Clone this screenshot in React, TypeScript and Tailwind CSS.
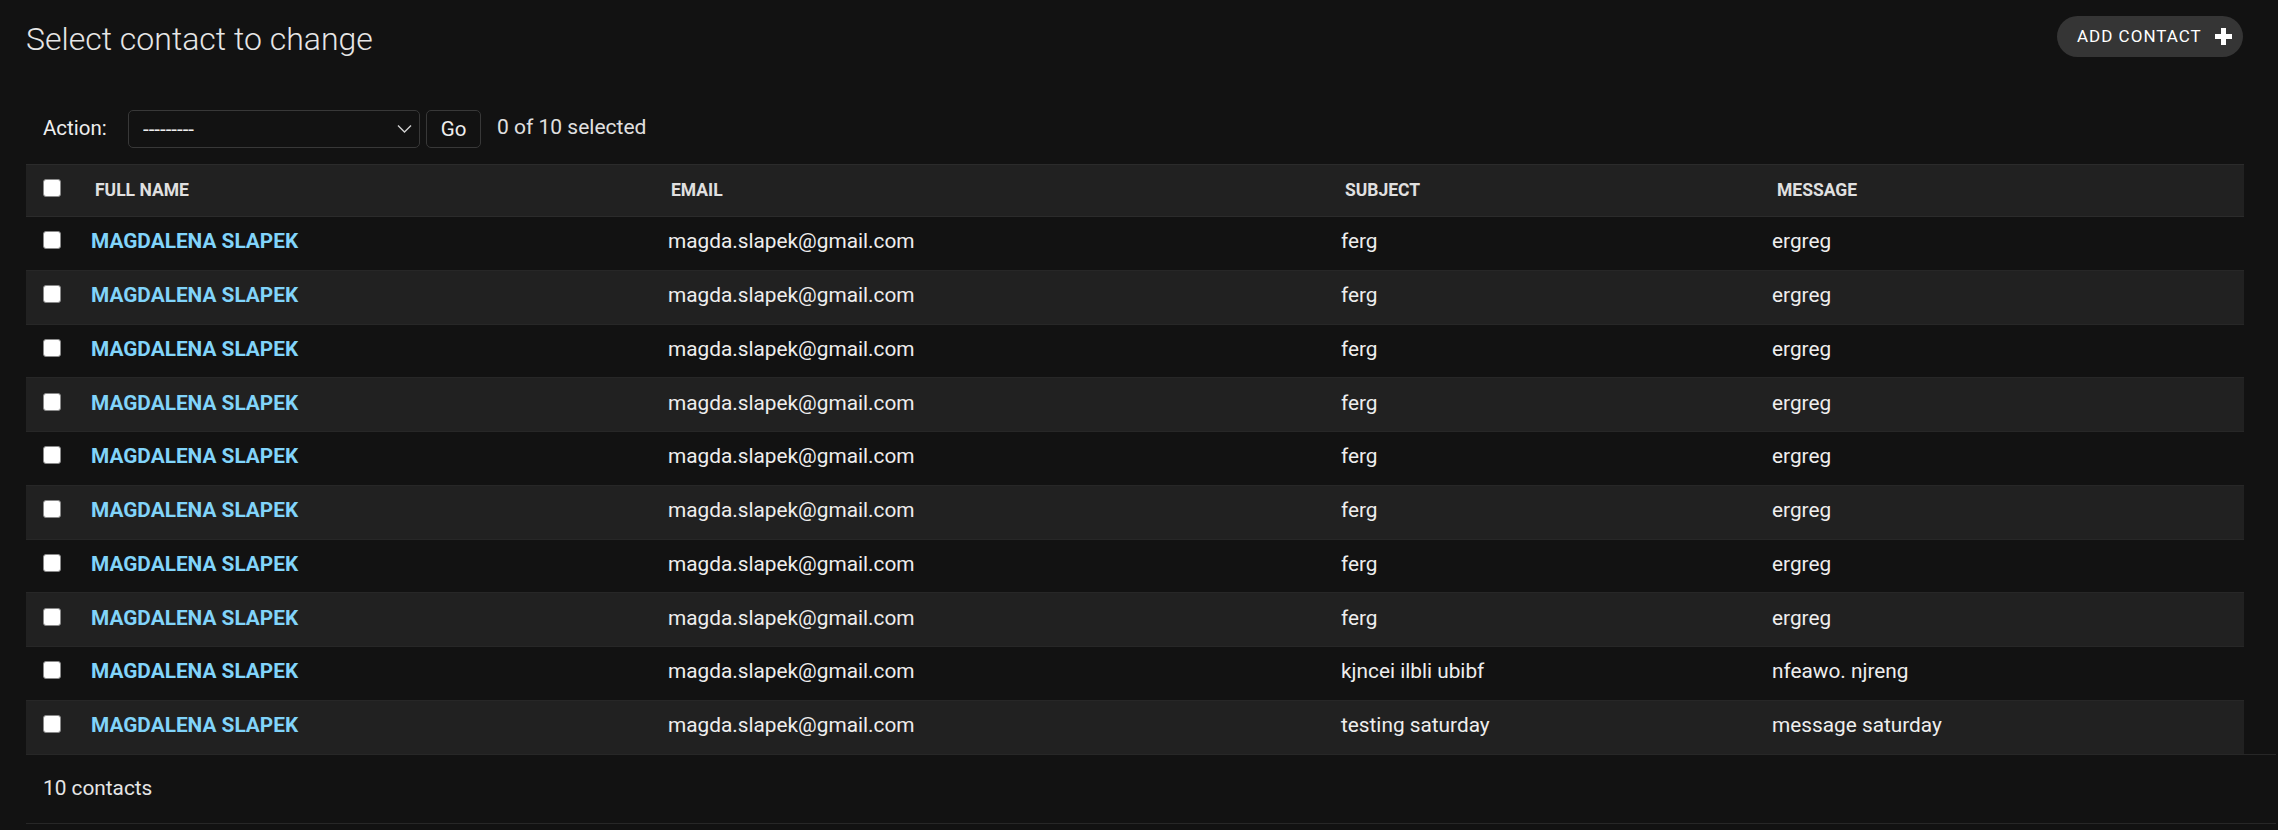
import React from 'react';

// Contact change list (Django admin, dark theme)

interface Contact {
  id: number;
  fullName: string;
  email: string;
  subject: string;
  message: string;
}

const contacts: Contact[] = [
  ...Array.from({ length: 8 }, (_, i) => ({
    id: i + 1,
    fullName: 'MAGDALENA SLAPEK',
    email: 'magda.slapek@gmail.com',
    subject: 'ferg',
    message: 'ergreg',
  })),
  { id: 9, fullName: 'MAGDALENA SLAPEK', email: 'magda.slapek@gmail.com', subject: 'kjncei ilbli ubibf', message: 'nfeawo. njreng' },
  { id: 10, fullName: 'MAGDALENA SLAPEK', email: 'magda.slapek@gmail.com', subject: 'testing saturday', message: 'message saturday' },
];

const cols = 'grid grid-cols-[53px_577px_674px_431px_483px]';

const Checkbox = () => (
  <input
    type="checkbox"
    className="appearance-none w-[18px] h-[18px] rounded-[3px] bg-white border border-[#8a8a8a] m-0"
  />
);

const PlusIcon = () => (
  <svg width="17" height="17" viewBox="0 0 17 17" className="ml-[13px]">
    <rect x="6" y="0" width="5" height="17" fill="#fff" />
    <rect x="0" y="6" width="17" height="5" fill="#fff" />
  </svg>
);

const Chevron = () => (
  <svg width="15" height="9" viewBox="0 0 15 9" className="absolute right-[8px] top-1/2 -translate-y-1/2 pointer-events-none">
    <path d="M1 1 L7.5 7.5 L14 1" fill="none" stroke="#d0d0d0" strokeWidth="1.4" />
  </svg>
);

const App: React.FC = () => {
  return (
    <div className="min-h-screen bg-[#121212] text-[#eeeeee] font-['Roboto',sans-serif]">
      {/* Antraštė */}
      <div className="flex justify-between items-start pl-[26px] pr-[35px] pt-[16px]">
        <h1 className="mt-[4px] text-[32px] leading-[38px] font-light text-[#e6e6e6]">
          Select contact to change
        </h1>
        <a
          href="#"
          className="flex items-center h-[41px] w-[186px] pl-[20px] rounded-full bg-[#353535] text-white text-[17px] tracking-[1px] uppercase"
        >
          Add contact
          <PlusIcon />
        </a>
      </div>

      {/* Veiksmai */}
      <div className="flex items-center h-[38px] mt-[52px] pl-[43px] text-[20.5px]">
        <span className="w-[85px] pb-[2px]">Action:</span>
        <div className="relative w-[292px] h-[38px]">
          <select className="appearance-none w-full h-full bg-[#121212] border border-[#383838] rounded-[5px] pl-[14px] text-[20.5px] text-[#eeeeee] outline-none">
            <option>---------</option>
          </select>
          <Chevron />
        </div>
        <button className="ml-[6px] w-[55px] h-[38px] border border-[#383838] rounded-[5px] bg-[#121212] text-[20.5px] text-[#eeeeee]">
          Go
        </button>
        <span className="ml-[16px] pb-[2px] text-[#e0e0e0] text-[21px]">0 of 10 selected</span>
      </div>

      {/* Lentelė */}
      <div className="mt-[16px] ml-[26px] w-[2218px]">
        <div className={`${cols} h-[53px] items-center bg-[#212121] border-y border-[#2b2b2b] text-[17.5px] font-bold text-[#e0e0e0]`}>
          <div className="pl-[17px] pb-[5px] flex"><Checkbox /></div>
          <div className="pl-[16px]">FULL NAME</div>
          <div className="pl-[15px]">EMAIL</div>
          <div className="pl-[15px]">SUBJECT</div>
          <div className="pl-[16px]">MESSAGE</div>
        </div>
        {contacts.map((c, i) => (
          <div
            key={c.id}
            className={`${cols} h-[53.75px] pb-[3px] items-center border-b border-[#272727] text-[20.8px] ${i % 2 === 1 ? 'bg-[#212121]' : 'bg-[#121212]'}`}
          >
            <div className="pl-[17px] pb-[3px] flex"><Checkbox /></div>
            <div className="pl-[12px]">
              <a href="#" className="font-bold text-[#81d4fa]">{c.fullName}</a>
            </div>
            <div className="pl-[12px]">{c.email}</div>
            <div className="pl-[11px]">{c.subject}</div>
            <div className="pl-[11px]">{c.message}</div>
          </div>
        ))}
      </div>

      {/* Puslapiavimas */}
      <div className="ml-[26px] w-[2250px] h-[70px] flex items-center pl-[17px] border-y border-[#272727] -mt-px text-[20.8px] text-[#e6e6e6]">
        10 contacts
      </div>
    </div>
  );
};

export default App;
